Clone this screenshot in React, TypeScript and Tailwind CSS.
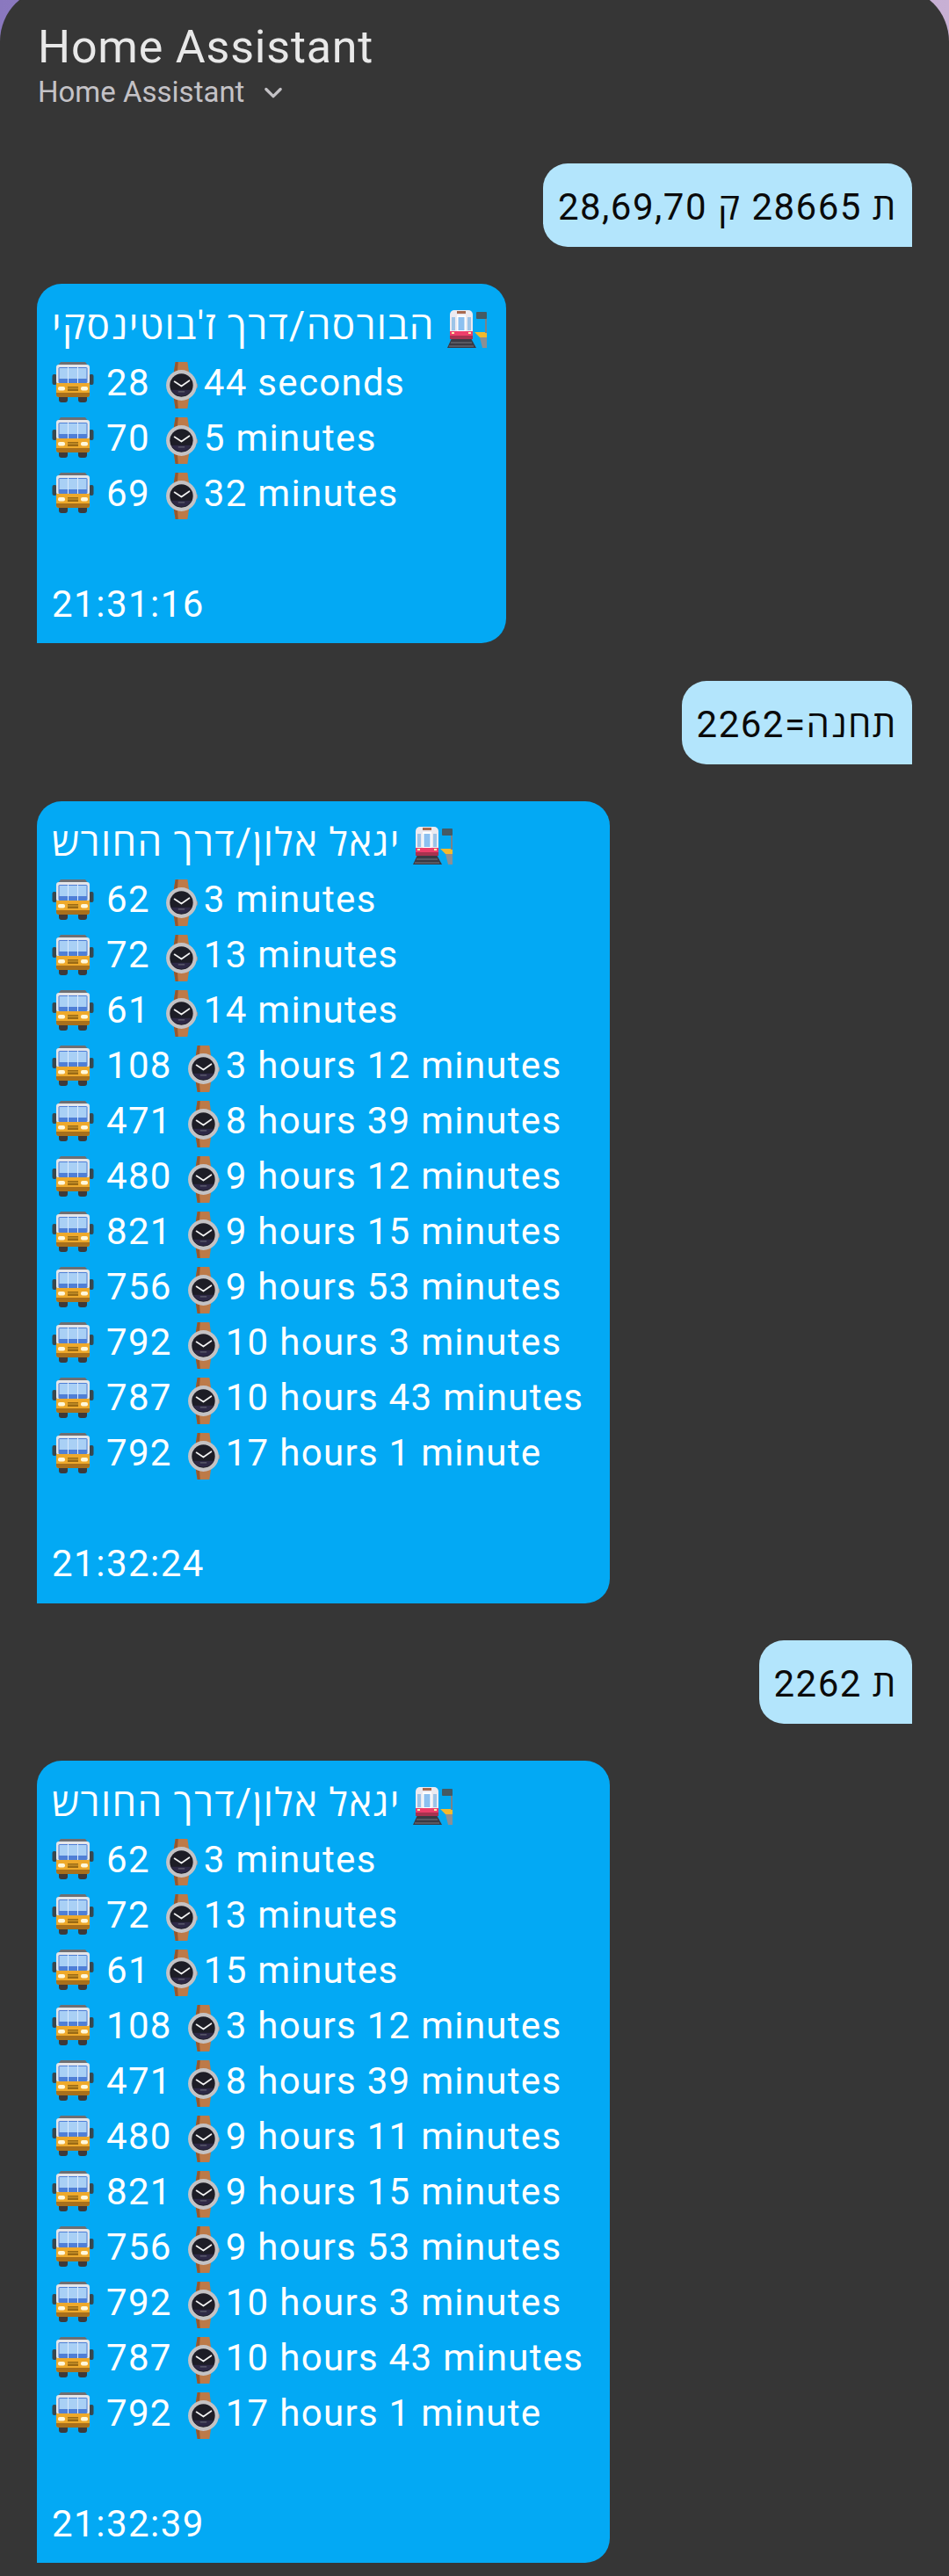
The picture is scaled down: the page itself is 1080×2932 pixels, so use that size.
function BusIcon() {
  return (
    <svg viewBox="0 0 48 48" className="inline-block w-[48px] h-[48px] shrink-0" xmlns="http://www.w3.org/2000/svg">
      <rect x="0.5" y="15" width="5" height="12" rx="2" fill="#37474f" />
      <rect x="42.5" y="15" width="5" height="12" rx="2" fill="#37474f" />
      <rect x="8" y="38" width="10" height="9" rx="3" fill="#3e3a3a" />
      <rect x="30" y="38" width="10" height="9" rx="3" fill="#3e3a3a" />
      <path d="M10 1h28l3 4H7z" fill="#6d6f73" />
      <rect x="5" y="4" width="38" height="22" rx="3" fill="#e4e6ea" />
      <rect x="7.5" y="7" width="33" height="18" rx="1.5" fill="#4f7fd6" />
      <path d="M8.5 8h31v12H8.5z" fill="#a9d0f5" />
      <path d="M18.5 7v18M29.5 7v18" stroke="#dbeafe" strokeWidth="1" />
      <path d="M5 25h38v13a3 3 0 0 1-3 3H8a3 3 0 0 1-3-3z" fill="#eea92b" />
      <path d="M5 36h38v2a3 3 0 0 1-3 3H8a3 3 0 0 1-3-3z" fill="#a8701c" />
      <rect x="7" y="29" width="8" height="4.5" rx="2" fill="#fff8dc" />
      <rect x="33" y="29" width="8" height="4.5" rx="2" fill="#fff8dc" />
      <rect x="18" y="29" width="12" height="5" fill="#9a6a14" />
      <path d="M18 31h12" stroke="#e8b03a" strokeWidth="0.8" />
    </svg>
  );
}

function WatchIcon() {
  return (
    <svg viewBox="0 0 36 52" className="inline-block w-[38px] h-[55px] shrink-0" xmlns="http://www.w3.org/2000/svg">
      <path d="M11 1h13l2 13H9z" fill="#bd7a48" />
      <path d="M9 38h17l-2 13H11z" fill="#bd7a48" />
      <path d="M11 1h3l-1 13H9zM11 51h3l-1-13H9z" fill="#96582e" />
      <rect x="32" y="24" width="3" height="5" rx="1" fill="#9a9a9e" />
      <circle cx="17.5" cy="26" r="16.5" fill="#c4c2c4" />
      <circle cx="17.5" cy="26" r="12.5" fill="#1d1d26" />
      <path d="M6.5 31a12.5 12.5 0 0 0 22 0z" fill="#2e2946" />
      <path d="M17.5 27L10 22M17.5 27L26 21" stroke="#f2f2f2" strokeWidth="1.6" strokeLinecap="round" />
      <path d="M14 33h7" stroke="#6b6b78" strokeWidth="1" />
    </svg>
  );
}

function StationIcon() {
  return (
    <svg viewBox="0 0 46 43" className="inline-block w-[46px] h-[43px] shrink-0" xmlns="http://www.w3.org/2000/svg">
      <path d="M37 31h8v12h-5z" fill="#8c8f94" />
      <path d="M31 25h14v6h-8z" fill="#f3b92d" />
      <rect x="43" y="9" width="2" height="17" fill="#7b8288" />
      <rect x="33" y="2" width="12" height="8" rx="1" fill="#455a64" />
      <path d="M0 43l5-11h22l6 11z" fill="#3a3a44" />
      <path d="M4 37h24M2 41h28" stroke="#77767f" strokeWidth="1" />
      <path d="M8 0h16a5 5 0 0 1 5 5v27H3V5a5 5 0 0 1 5-5z" fill="#eceaf0" />
      <rect x="11" y="1" width="10" height="3" fill="#a86a50" />
      <rect x="5" y="8" width="4" height="15" fill="#9cc4e8" />
      <rect x="23" y="8" width="4" height="15" fill="#9cc4e8" />
      <rect x="11" y="6" width="10" height="19" fill="#ffffff" />
      <rect x="12.5" y="8" width="7" height="15" fill="#8cc0f0" />
      <path d="M3 24h26v6H3z" fill="#ee3e6a" />
      <path d="M3 29h26v4H3z" fill="#a8324f" />
      <rect x="5" y="25" width="3" height="2" fill="#ffe9a8" />
      <rect x="24" y="25" width="3" height="2" fill="#ffe9a8" />
    </svg>
  );
}

function Row({ bus, time }: { bus: string; time: string }) {
  return (
    <div className="flex h-[63px] items-center whitespace-nowrap pt-[3px] pr-[13px] tracking-[1.3px]">
      <BusIcon />
      <span className="ml-[14px]">{bus}</span>
      <span className="ml-[17px] mr-[6px]">
        <WatchIcon />
      </span>
      <span>{time}</span>
    </div>
  );
}

function BotBubble({ title, rows, stamp }: { title: string; rows: [string, string][]; stamp: string }) {
  return (
    <div className="w-fit rounded-[28px] rounded-bl-none bg-[#03a9f4] px-[17px] pt-[16px] pb-[15px] text-white">
      <div className="flex h-[63px] items-center whitespace-nowrap">
        <span dir="rtl" className="text-[44px] tracking-[1.4px]">
          {title}
        </span>
        <span className="ml-[14px] mr-[4px]">
          <StationIcon />
        </span>
      </div>
      {rows.map((r, i) => (
        <Row key={i} bus={r[0]} time={r[1]} />
      ))}
      <div className="h-[63px]" />
      <div className="flex h-[63px] items-center pt-[3px]">{stamp}</div>
    </div>
  );
}

function UserBubble({ text }: { text: string }) {
  return (
    <div className="w-fit self-end rounded-[28px] rounded-br-none bg-[#b3e5fc] px-[17px] py-[16px] text-[#0a0a0a]">
      <div className="flex h-[63px] items-center whitespace-nowrap pt-[4px]" dir="rtl">
        {text}
      </div>
    </div>
  );
}

const ROWS_A: [string, string][] = [
  ["62", "3 minutes"],
  ["72", "13 minutes"],
  ["61", "14 minutes"],
  ["108", "3 hours 12 minutes"],
  ["471", "8 hours 39 minutes"],
  ["480", "9 hours 12 minutes"],
  ["821", "9 hours 15 minutes"],
  ["756", "9 hours 53 minutes"],
  ["792", "10 hours 3 minutes"],
  ["787", "10 hours 43 minutes"],
  ["792", "17 hours 1 minute"],
];

const ROWS_B: [string, string][] = [
  ["62", "3 minutes"],
  ["72", "13 minutes"],
  ["61", "15 minutes"],
  ["108", "3 hours 12 minutes"],
  ["471", "8 hours 39 minutes"],
  ["480", "9 hours 11 minutes"],
  ["821", "9 hours 15 minutes"],
  ["756", "9 hours 53 minutes"],
  ["792", "10 hours 3 minutes"],
  ["787", "10 hours 43 minutes"],
  ["792", "17 hours 1 minute"],
];

export default function App() {
  return (
    <div className="h-[2932px] w-[1080px] overflow-hidden bg-gradient-to-r from-[#8a78bf] to-[#c8b0d4] font-['Roboto','Open_Sans',sans-serif]">
      {/* panel top sits above the window so only part of the corner curve shows */}
      <div className="-mt-[14px] h-[2946px] rounded-t-[61px] bg-[#363636]">
        {/* Header */}
        <div className="px-[43px] pt-[40px]">
          <div className="text-[52px] leading-[56px] tracking-[0.8px] text-[#e8e8e8]">Home Assistant</div>
          <div className="mt-[3px] flex items-center text-[33px] leading-[40px] text-[#c4c2c6]">
            Home Assistant
            <svg viewBox="0 0 24 24" className="ml-[19px] w-[28px] h-[28px]" fill="none" stroke="#c4c2c6" strokeWidth="2.8" strokeLinecap="round" strokeLinejoin="round">
              <path d="M5 9l7 7 7-7" />
            </svg>
          </div>
        </div>

        {/* Conversation */}
        <div className="flex flex-col gap-[42.25px] px-[42px] pt-[61px] text-[42px] tracking-[1.5px]">
          <UserBubble text="ת 28665 ק 28,69,70" />
          <BotBubble
            title="הבורסה/דרך ז'בוטינסקי"
            rows={[
              ["28", "44 seconds"],
              ["70", "5 minutes"],
              ["69", "32 minutes"],
            ]}
            stamp="21:31:16"
          />
          <UserBubble text="תחנה=2262" />
          <BotBubble title="יגאל אלון/דרך החורש" rows={ROWS_A} stamp="21:32:24" />
          <UserBubble text="ת 2262" />
          <BotBubble title="יגאל אלון/דרך החורש" rows={ROWS_B} stamp="21:32:39" />
        </div>
      </div>
    </div>
  );
}
